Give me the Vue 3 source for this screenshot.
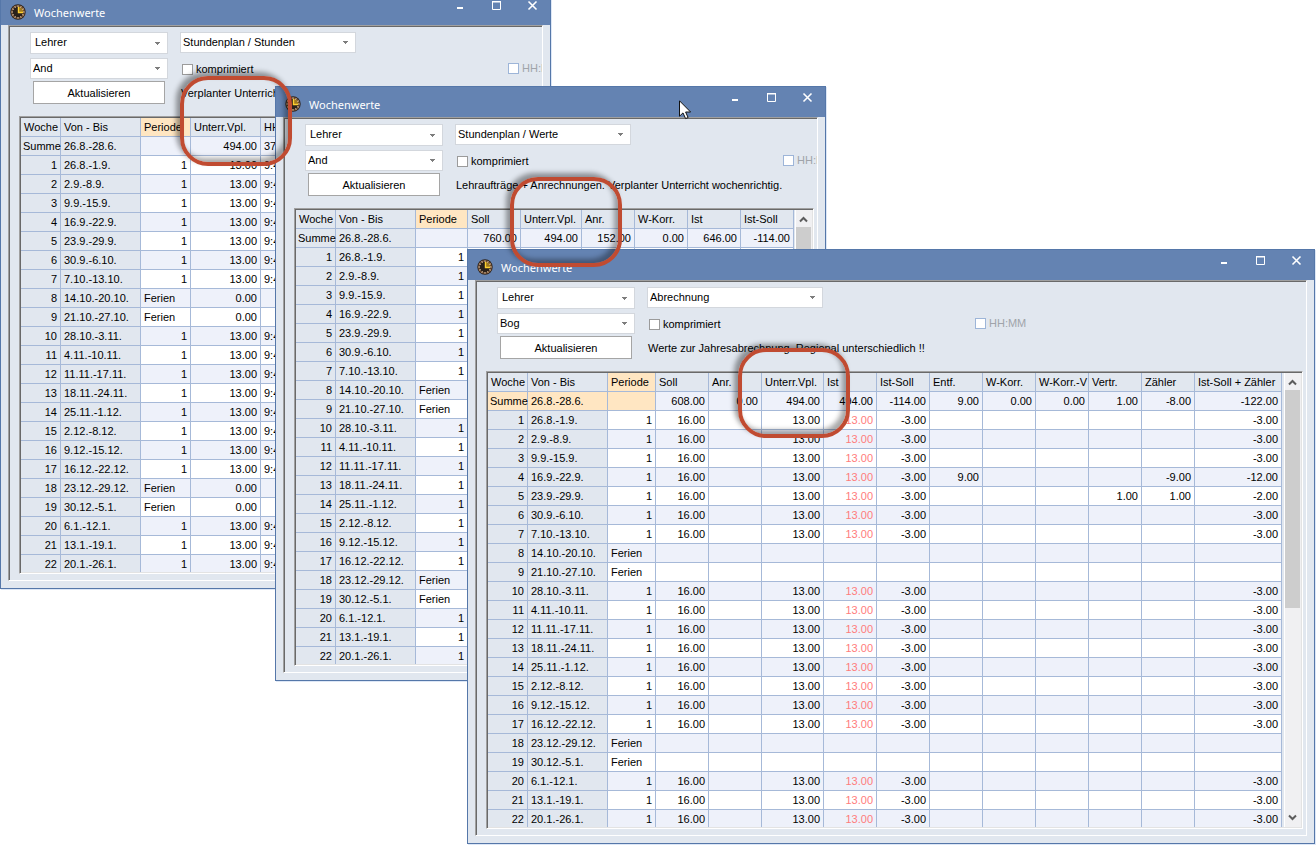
<script setup>
const weeks = [
  '26.8.-1.9.', '2.9.-8.9.', '9.9.-15.9.', '16.9.-22.9.', '23.9.-29.9.', '30.9.-6.10.',
  '7.10.-13.10.', '14.10.-20.10.', '21.10.-27.10.', '28.10.-3.11.', '4.11.-10.11.',
  '11.11.-17.11.', '18.11.-24.11.', '25.11.-1.12.', '2.12.-8.12.', '9.12.-15.12.',
  '16.12.-22.12.', '23.12.-29.12.', '30.12.-5.1.', '6.1.-12.1.', '13.1.-19.1.', '20.1.-26.1.',
]
const holidays = [8, 9, 18, 19]

// Builds one row per week; `cells` returns the values after the "Periode" column.
const buildRows = (cells) =>
  weeks.map((range, i) => {
    const no = i + 1
    const free = holidays.includes(no)
    return { no, range, period: free ? 'Ferien' : '1', free, cells: cells(no, free) }
  })

const windows = [
  {
    id: 'hours',
    teacher: 'And',
    view: 'Stundenplan / Stunden',
    info: 'Verplanter Unterricht wochenrichtig.',
    columns: [
      { name: 'Unterr.Vpl.', width: 70 },
      { name: 'HH:MM', width: 53, left: true },
    ],
    periodWidth: 50,
    sum: ['494.00', '370:30'],
    rows: buildRows((no, free) => (free ? ['0.00', ''] : ['13.00', '9:45'])),
  },
  {
    id: 'values',
    teacher: 'And',
    view: 'Stundenplan / Werte',
    info: 'Lehraufträge + Anrechnungen. Verplanter Unterricht wochenrichtig.',
    columns: [
      { name: 'Soll', width: 53 },
      { name: 'Unterr.Vpl.', width: 61 },
      { name: 'Anr.', width: 53 },
      { name: 'W-Korr.', width: 53 },
      { name: 'Ist', width: 53 },
      { name: 'Ist-Soll', width: 53 },
    ],
    periodWidth: 52,
    sum: ['760.00', '494.00', '152.00', '0.00', '646.00', '-114.00'],
    rows: buildRows(() => ['', '', '', '', '', '']),
  },
  {
    id: 'billing',
    teacher: 'Bog',
    view: 'Abrechnung',
    info: 'Werte zur Jahresabrechnung. Regional unterschiedlich !!',
    columns: [
      { name: 'Soll', width: 53 },
      { name: 'Anr.', width: 53 },
      { name: 'Unterr.Vpl.', width: 62 },
      { name: 'Ist', width: 53, red: true },
      { name: 'Ist-Soll', width: 53 },
      { name: 'Entf.', width: 53 },
      { name: 'W-Korr.', width: 53 },
      { name: 'W-Korr.-V', width: 53 },
      { name: 'Vertr.', width: 53 },
      { name: 'Zähler', width: 53 },
      { name: 'Ist-Soll + Zähler', width: 87 },
    ],
    periodWidth: 48,
    sumSelected: true,
    sum: ['608.00', '0.00', '494.00', '494.00', '-114.00', '9.00', '0.00', '0.00', '1.00', '-8.00', '-122.00'],
    rows: buildRows((no, free) => {
      if (free) return Array(11).fill('')
      const row = ['16.00', '', '13.00', '13.00', '-3.00', '', '', '', '', '', '-3.00']
      if (no === 4) { row[5] = '9.00'; row[9] = '-9.00'; row[10] = '-12.00' }
      if (no === 5) { row[8] = '1.00'; row[9] = '1.00'; row[10] = '-2.00' }
      return row
    }),
  },
]

const tableWidth = (w) => 120 + w.periodWidth + w.columns.reduce((s, c) => s + c.width, 0)
const ticks = Array.from({ length: 12 }, (_, i) => i * 30)
</script>

<template>
  <main class="desktop">
    <section v-for="w in windows" :key="w.id" class="window" :class="w.id">
      <header class="titlebar">
        <svg class="clock" viewBox="0 0 16 16" aria-hidden="true">
          <circle cx="8" cy="8" r="7.7" fill="#2a211b" />
          <circle cx="8" cy="8" r="6.3" fill="none" stroke="#6b4a30" stroke-width="1.4" />
          <path d="M8 8V2.4A5.6 5.6 0 0 1 13.6 8Z" fill="#a07a20" />
          <rect v-for="t in ticks" :key="t" x="7.5" y="1.4" width="1" height="1.6" fill="#e6c6a4" :transform="`rotate(${t} 8 8)`" />
          <path d="M8.5 3V8.5H13" fill="none" stroke="#ffd030" stroke-width="1.4" />
        </svg>
        <h2>Wochenwerte</h2>
        <div class="caption">
          <button type="button" aria-label="Minimieren">
            <svg viewBox="0 0 11 11"><path d="M2 8H8" stroke="#fff" stroke-width="2" /></svg>
          </button>
          <button type="button" aria-label="Maximieren">
            <svg viewBox="0 0 11 11"><path d="M1.5 1V9.5H9.5V1M1 1.5H10M1 2H10" fill="none" stroke="#fff" /></svg>
          </button>
          <button type="button" aria-label="Schließen">
            <svg viewBox="0 0 11 11"><path d="M1.5 1.5L9.5 9.5M9.5 1.5L1.5 9.5" stroke="#fff" stroke-width="1.6" /></svg>
          </button>
        </div>
      </header>

      <div class="panel">
        <div class="controls">
          <div class="drop drop-kind">
            <select aria-label="Elementtyp"><option>Lehrer</option></select>
            <svg viewBox="0 0 5 3"><path d="M0 0H5V1H4V2H3V3H2V2H1V1H0Z" fill="#7d7d7d" /></svg>
          </div>
          <div class="drop drop-view">
            <select aria-label="Ansicht"><option>{{ w.view }}</option></select>
            <svg viewBox="0 0 5 3"><path d="M0 0H5V1H4V2H3V3H2V2H1V1H0Z" fill="#7d7d7d" /></svg>
          </div>
          <div class="drop drop-teacher">
            <select aria-label="Lehrer"><option>{{ w.teacher }}</option></select>
            <svg viewBox="0 0 5 3"><path d="M0 0H5V1H4V2H3V3H2V2H1V1H0Z" fill="#7d7d7d" /></svg>
          </div>
          <label class="check check-compact"><input type="checkbox" />komprimiert</label>
          <label class="check check-format"><input type="checkbox" disabled />HH:MM</label>
          <button type="button" class="refresh">Aktualisieren</button>
          <p class="info">{{ w.info }}</p>
        </div>

        <div class="grid">
          <div class="rows">
            <table :style="{ width: tableWidth(w) + 'px' }">
              <colgroup>
                <col class="col-week" />
                <col class="col-range" />
                <col :style="{ width: w.periodWidth + 'px' }" />
                <col v-for="c in w.columns" :key="c.name" :style="{ width: c.width + 'px' }" />
              </colgroup>
              <thead>
                <tr>
                  <th>Woche</th>
                  <th>Von - Bis</th>
                  <th class="hot">Periode</th>
                  <th v-for="c in w.columns" :key="c.name">{{ c.name }}</th>
                </tr>
              </thead>
              <tbody>
                <tr class="sum" :class="{ selected: w.sumSelected }">
                  <td class="fixed left">Summe</td>
                  <td class="fixed left">26.8.-28.6.</td>
                  <td class="period"></td>
                  <td v-for="(v, i) in w.sum" :key="i" :class="{ left: w.columns[i].left }">{{ v }}</td>
                </tr>
                <tr v-for="r in w.rows" :key="r.no">
                  <td class="fixed">{{ r.no }}</td>
                  <td class="fixed left">{{ r.range }}</td>
                  <td :class="{ left: r.free }">{{ r.period }}</td>
                  <td v-for="(v, i) in r.cells" :key="i" :class="{ red: w.columns[i].red, left: w.columns[i].left }">{{ v }}</td>
                </tr>
              </tbody>
            </table>
          </div>
          <div class="scrollbar">
            <svg viewBox="0 0 9 9"><path d="M1 6.5L4.5 3L8 6.5" fill="none" stroke="#5c5c5c" stroke-width="2" /></svg>
            <div class="track"><div class="thumb"></div></div>
            <svg viewBox="0 0 9 9"><path d="M1 2.5L4.5 6L8 2.5" fill="none" stroke="#5c5c5c" stroke-width="2" /></svg>
          </div>
        </div>
      </div>
    </section>

    <div class="mark mark-hours"></div>
    <div class="mark mark-values"></div>
    <div class="mark mark-billing"></div>

    <svg class="cursor" viewBox="0 0 13 20" aria-hidden="true">
      <path d="M0.5 0.8V16.2L4 12.9L6.6 18.6L9.1 17.5L6.6 12H11.6Z" fill="#fff" stroke="#111" />
    </svg>
  </main>
</template>

<style>
body {
  margin: 0;
  background: #fff;
}
</style>

<style scoped>
* {
  box-sizing: border-box;
}
.desktop {
  position: relative;
  min-height: 100vh;
  overflow: hidden;
  font: 11px/18px "Liberation Sans", Arial, sans-serif;
  color: #000;
}
.window {
  position: absolute;
  display: flex;
  flex-direction: column;
  height: 595px;
  background: #e1e7ef;
  border: 1px solid #5577a9;
  box-shadow: 1px 1px 0 #dde7f6;
}
.hours { left: 0; top: -6px; width: 551px; }
.values { left: 275px; top: 86px; width: 551px; }
.billing { left: 467px; top: 249px; width: 848px; }

.titlebar {
  display: flex;
  height: 30px;
  flex: none;
  padding-left: 9px;
  background: #6483b2;
  color: #fff;
}
.clock {
  width: 16px;
  height: 16px;
  margin-top: 9px;
}
h2 {
  flex: 1;
  margin: 9px 0 0 8px;
  font: 11px/18px "Noto Sans", sans-serif;
}
.caption {
  display: flex;
}
.caption button {
  display: flex;
  align-items: center;
  justify-content: center;
  width: 36px;
  height: 21px;
  padding: 0;
  border: 0;
  background: none;
}
.caption svg {
  width: 11px;
  height: 11px;
}
.panel {
  flex: 1;
  display: flex;
  flex-direction: column;
  min-height: 0;
  margin: 0 7px 7px;
  padding: 6px 3px 6px 10px;
  overflow: hidden;
  border: 1px solid;
  border-color: #a0a0a0 #fff #fff #a0a0a0;
  box-shadow: inset 1px 1px 0 #696969;
}
.controls {
  display: grid;
  grid-template-columns: 138px 316px 1fr;
  grid-template-rows: 23px 20px 23px;
  gap: 3px 12px;
  flex: none;
  padding-left: 11px;
  white-space: nowrap;
}
.drop {
  display: flex;
  align-items: center;
  height: 21px;
  padding-right: 7px;
  background: #fff;
  border: 1px solid #d3d7dd;
}
.drop select {
  flex: 1;
  min-width: 0;
  padding: 0 0 2px 2px;
  appearance: none;
  border: 0;
  background: none;
  color: inherit;
  font: inherit;
}
.drop svg {
  width: 5px;
  height: 3px;
}
.drop-kind { height: 22px; }
.drop-kind select { padding-left: 4px; }
.drop-view { grid-column: 2 / 4; width: 176px; }
.check {
  display: flex;
  align-items: center;
  gap: 3px;
}
.check-compact { padding: 2px 0 0 2px; }
.check-format { color: #a0a4aa; }
.check input {
  flex: none;
  width: 11px;
  height: 11px;
  margin: 0;
  appearance: none;
  background: #fff;
  border: 1px solid #9b9b9b;
}
.check-format input { border-color: #9db5d8; }
.refresh {
  margin-left: 3px;
  width: 132px;
  padding: 1px 0 0;
  background: #fff;
  border: 1px solid #a5a5a5;
  color: inherit;
  font: inherit;
}
.info {
  grid-column: 2 / 4;
  margin: 3px 0 0 1px;
}
.grid {
  flex: 1;
  display: flex;
  justify-content: space-between;
  min-height: 0;
  margin-top: 12px;
  padding: 1px;
  border: 1px solid;
  border-color: #a0a0a0 #fff #fff #a0a0a0;
  box-shadow: inset 1px 1px 0 #696969, inset -1px -1px 0 #e3e3e3;
}
.rows {
  overflow: hidden;
}
table {
  table-layout: fixed;
  border-collapse: separate;
  border-spacing: 0;
  white-space: nowrap;
}
.col-week { width: 40px; }
.col-range { width: 80px; }
th,
td {
  height: 19px;
  padding: 0 3px;
  border: solid #a6b9d8;
  border-width: 0 1px 1px 0;
  text-align: right;
  font-weight: 400;
}
th {
  background: #e1e7ef;
  text-align: left;
}
td { background: #fff; }
tr:nth-child(odd) td { background: #eef1fa; }
tbody tr td.fixed { background: #e1e7ef; }
th.hot,
tbody tr.selected td.fixed,
tbody tr.selected td.period { background: #ffe6c2; }
td.left { text-align: left; }
th:first-child { padding-right: 0; }
.sum td:first-child { padding: 0 0 0 2px; }
td.red { color: #ff7c7c; }
.scrollbar {
  flex: none;
  display: flex;
  flex-direction: column;
  align-items: center;
  width: 17px;
  padding: 5px 1px 5px 0;
  background: #f0f0f2;
  border-left: 1px solid #fff;
}
.scrollbar svg {
  width: 9px;
  height: 9px;
}
.track {
  flex: 1;
  align-self: stretch;
  padding: 3px 0;
}
.thumb {
  height: 52%;
  background: #cdcdcd;
}
.mark {
  position: absolute;
  width: 112px;
  height: 90px;
  border: 4px solid #c04b31;
  border-radius: 28px;
  box-shadow: -4px -4px 5px rgba(0, 0, 0, 0.38), inset -4px -4px 5px rgba(0, 0, 0, 0.34);
}
.mark-hours { left: 180px; top: 76px; }
.mark-values { left: 510px; top: 177px; }
.mark-billing { left: 738px; top: 348px; }
.cursor {
  position: absolute;
  left: 679px;
  top: 100px;
  width: 13px;
  height: 20px;
}
</style>
